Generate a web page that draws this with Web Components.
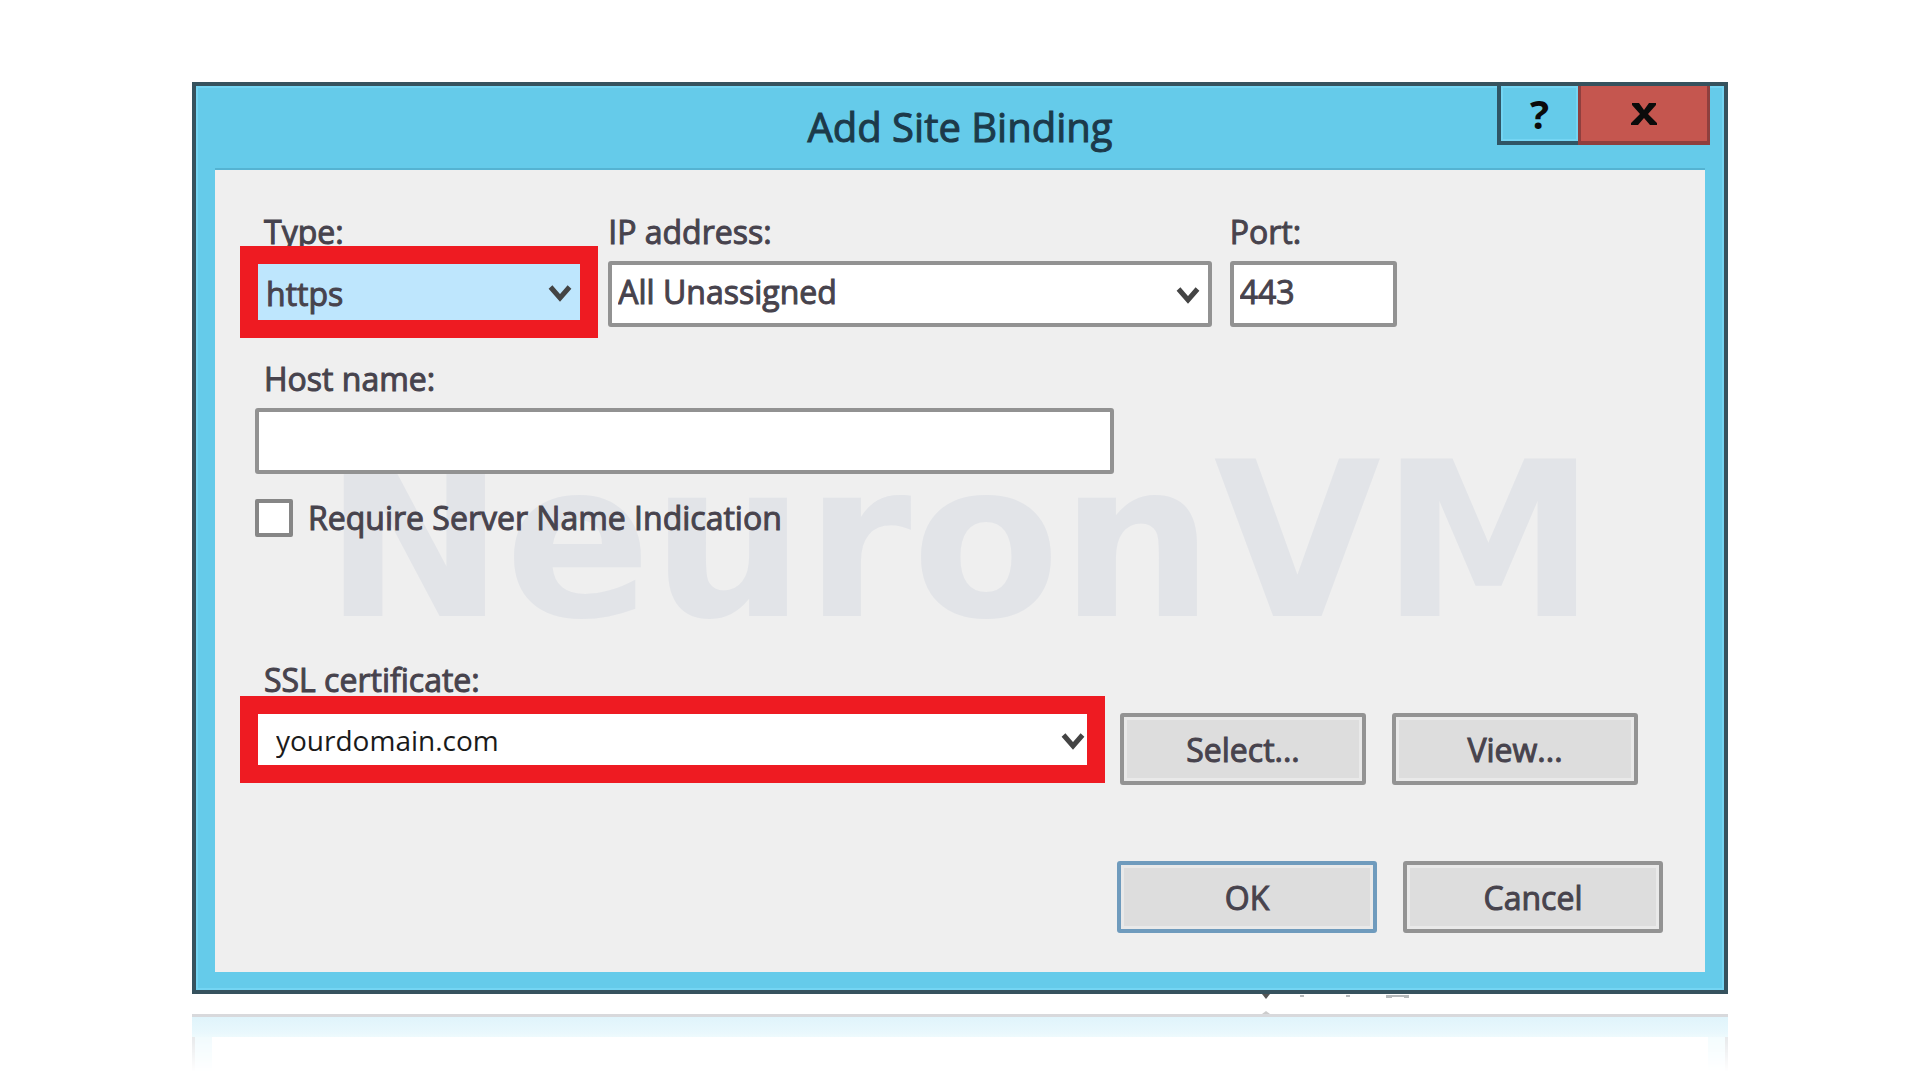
<!DOCTYPE html>
<html lang="en">
<head>
<meta charset="utf-8">
<title>Add Site Binding</title>
<style>
  body { margin: 0; background: #fff; font-family: "Open Sans", "Noto Sans", sans-serif; color: #47434d; }
  dialog-window { margin: 82px 10% 0; }
</style>
</head>
<body>
<dialog-window heading="Add Site Binding">
  <binding-form></binding-form>
</dialog-window>
<script>
const define = (name, markup, setup) => {
  const template = document.createElement('template');
  template.innerHTML = markup;
  customElements.define(name, class extends HTMLElement {
    constructor() {
      super();
      this.attachShadow({ mode: 'open' }).append(template.content.cloneNode(true));
    }
    connectedCallback() { if (setup) setup(this, this.shadowRoot); }
  });
};

/* Window frame: title bar, caption buttons, client area, floor reflection */
define('dialog-window', `
<style>
  :host { display: block; }
  * { box-sizing: border-box; }
  .frame { border: 4px solid #36525e; background: #65cbea; box-shadow: inset 0 0 0 2px #74d5f3; padding: 0 19px 18px; }
  header { display: grid; grid-template-columns: 1fr auto 1fr; height: 84px; border-bottom: 2px solid #55b3d2; }
  h1 { margin: 0; align-self: center; font-size: 40px; line-height: 48px; font-weight: 400; -webkit-text-stroke: 1px; color: #1c3a4a; grid-column: 2; }
  .caption { display: flex; justify-content: flex-end; margin-right: -5px; }
  button { font: inherit; height: 59px; padding: 0; margin: 0; display: grid; place-items: center; color: #0b0b0b; }
  .help { width: 81px; background: #65cbea; border: solid #2f5565; border-width: 0 0 4px 4px; box-shadow: inset 0 0 0 2px #74d5f3; font: 700 40px/40px "Open Sans", sans-serif; }
  .close { width: 132px; background: #c5564f; border: solid #8f3f3e; border-width: 0 3px 4px 3px; }
  main { background: #efefef; }
  .ticks { display: block; width: 100%; height: 20px; }
  .floor { height: 58px; border-top: 3px solid #d8d9dc;
    background: linear-gradient(#e0f4fb, #ebf9fd 20px, transparent 20px),
      linear-gradient(90deg, #e4e6e8 3px, #effafd 3px 20px, transparent 20px calc(100% - 20px), #f2fcfe calc(100% - 20px) calc(100% - 3px), #e4e6e8 calc(100% - 3px));
    -webkit-mask: linear-gradient(#000 30%, transparent); mask: linear-gradient(#000 30%, transparent); }
</style>
<div class="frame">
  <header>
    <h1></h1>
    <div class="caption">
      <button class="help" aria-label="Help">?</button>
      <button class="close" aria-label="Close"><svg width="26" height="24" viewBox="0 0 26 24"><path d="M1 1H8L13 8L18 1H25V3L17 12L26 21V23H19L13 16L7 23H0V21L9 12L1 3Z" fill="#0b0b0b"/></svg></button>
    </div>
  </header>
  <main><slot></slot></main>
</div>
<svg class="ticks" viewBox="0 0 1536 20" preserveAspectRatio="none"><path d="M1070 0h8l-4 5z" fill="#555"/><path d="M1108 1h4v2h-4zM1154 1h4v2h-4zM1194 1h6v3h-6zM1200 1h12v2h-12zM1212 1h5v3h-5z" fill="#b5b9bb"/><path d="M1070 20h8l-4-3z" fill="#ccc"/></svg>
<div class="floor"></div>
`, (host, root) => { root.querySelector('h1').textContent = host.getAttribute('heading'); });

const fieldBase = `
  :host { display: flex; flex-direction: column; }
  * { box-sizing: border-box; }
  label { display: block; height: 38px; font-size: 32px; line-height: 38px; -webkit-text-stroke: 1px; white-space: nowrap; padding-left: var(--label-inset, 9px); margin-bottom: var(--label-gap, 10px); }
`;

/* Labelled text box */
define('text-field', `
<style>${fieldBase}
  input { display: block; width: 100%; height: 66px; border: 4px solid #929292; border-radius: 3px; background: #fff; font: inherit; font-size: 32px; -webkit-text-stroke: 1px; color: inherit; padding: 0 6px 6px; outline: 0; }
</style>
<label for="control"></label><input id="control" type="text">
`, (host, root) => {
  root.querySelector('label').textContent = host.getAttribute('label');
  root.querySelector('input').value = host.getAttribute('value') || '';
});

/* Labelled drop-down, optionally ringed by a red marker */
define('drop-field', `
<style>${fieldBase}
  .control { display: grid; position: relative; align-items: center; }
  select, svg { grid-area: 1 / 1; }
  select { appearance: none; width: 100%; height: 66px; border: 4px solid #929292; border-radius: 3px; background: #fff; font: inherit; font-size: 32px; -webkit-text-stroke: 1px; color: inherit; padding: 0 6px 6px; outline: 0; }
  svg { justify-self: end; margin: 2px var(--arrow-inset, 12px) 0 0; pointer-events: none; }
  :host([marked]) .control { margin: 3px 10px 0 3px; box-shadow: 0 0 0 18px #ee1b22; }
  :host([marked]) select { height: 56px; border: 0; border-radius: 0; background: #bee6fd; padding: 2px 8px 0; }
  :host([marked=domain]) .control { margin: 0 7px 0 3px; }
  :host([marked=domain]) select { height: 51px; background: #fff; color: #1a1a1a; font-size: 28px; -webkit-text-stroke: 0; padding: 0 18px; }
</style>
<label for="control"></label>
<div class="control">
  <select id="control"><option></option></select>
  <svg width="24" height="18" viewBox="0 0 24 18"><path d="M2.500 3L12 14L21.500 3" fill="none" stroke="#444" stroke-width="5"/></svg>
</div>
`, (host, root) => {
  root.querySelector('label').textContent = host.getAttribute('label');
  root.querySelector('option').textContent = host.getAttribute('value');
});

define('check-field', `
<style>
  :host { display: block; }
  label { display: flex; align-items: center; gap: 15px; height: 38px; font-size: 32px; line-height: 38px; -webkit-text-stroke: 1px; white-space: nowrap; }
  input { appearance: none; box-sizing: border-box; width: 38px; height: 38px; margin: 0; border: 4px solid #868686; border-radius: 2px; background: #fff; }
</style>
<label><input type="checkbox"><span><slot></slot></span></label>
`);

define('push-button', `
<style>
  :host { display: block; }
  button { display: block; box-sizing: border-box; width: 100%; height: 72px; border: 4px solid #939393; border-radius: 3px; background: #ddd; box-shadow: inset 0 0 0 3px #e9e9e9; font: inherit; font-size: 32px; -webkit-text-stroke: 1px; color: inherit; padding: 0; }
  :host([primary]) button { border-color: #6f9bbd; }
</style>
<button type="button"><slot></slot></button>
`);

define('binding-form', `
<style>
  :host { display: grid; }
  .mark { grid-area: 1 / 1; justify-self: center; margin-top: 252px; font: 700 216px/240px "DejaVu Sans", sans-serif; color: #e2e4e8; user-select: none; }
  form { grid-area: 1 / 1; position: relative; padding: 43px 42px 39px 40px; min-width: 0; }
  .top { display: grid; grid-template-columns: 335fr 603fr 167fr 248fr; gap: 18px; }
  .host { width: 61%; margin-top: 33px; }
  .sni { margin-top: 25px; }
  .cert { display: flex; align-items: flex-end; gap: 26px; margin-top: 124px; padding-right: 25px; }
  .cert drop-field { flex: 1; align-self: flex-start; --label-gap: 15px; --arrow-inset: 2px; }
  .cert push-button { width: 246px; margin-top: 52px; }
  .actions { display: flex; justify-content: flex-end; gap: 26px; margin-top: 76px; }
  .actions push-button { width: 260px; }
</style>
<div class="mark">NeuronVM</div>
<form>
  <div class="top">
    <drop-field label="Type:" value="https" marked style="--arrow-inset: 8px"></drop-field>
    <drop-field label="IP address:" value="All Unassigned" style="--label-inset: 0px"></drop-field>
    <text-field label="Port:" value="443" style="--label-inset: 0px"></text-field>
  </div>
  <text-field class="host" label="Host name:"></text-field>
  <check-field class="sni">Require Server Name Indication</check-field>
  <div class="cert">
    <drop-field label="SSL certificate:" value="yourdomain.com" marked="domain"></drop-field>
    <push-button>Select...</push-button>
    <push-button>View...</push-button>
  </div>
  <div class="actions">
    <push-button primary>OK</push-button>
    <push-button>Cancel</push-button>
  </div>
</form>
`);
</script>
</body>
</html>
